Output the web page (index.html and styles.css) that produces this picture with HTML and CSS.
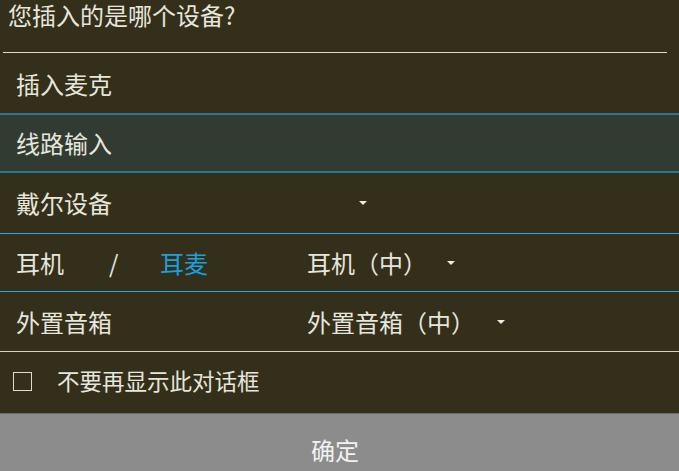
FILE: index.html
```html
<!DOCTYPE html>
<html lang="zh-CN">
<head>
<meta charset="utf-8">
<title>设备选择</title>
<link rel="stylesheet" href="styles.css">
</head>
<body>
<div class="dialog">
  <div class="title">您插入的是哪个设备?</div>
  <div class="title-rule"></div>
  <div class="row row-mic">插入麦克</div>
  <div class="row row-line">线路输入</div>
  <div class="row row-dell">
    <span class="label">戴尔设备</span>
    <span class="arrow arrow-dell"></span>
  </div>
  <div class="row row-head">
    <span class="c1">耳机</span>
    <span class="c2">/</span>
    <span class="c3 active">耳麦</span>
    <span class="c4">耳机（中）</span>
    <span class="arrow"></span>
  </div>
  <div class="row row-spk">
    <span class="c-wide">外置音箱</span>
    <span class="c4">外置音箱（中）</span>
    <span class="arrow arrow-spk"></span>
  </div>
  <div class="check-row">
    <span class="checkbox"></span>
    <span class="check-label">不要再显示此对话框</span>
  </div>
  <div class="button">确定</div>
</div>
</body>
</html>
```

FILE: styles.css
```css
html, body {
  margin: 0;
  padding: 0;
  background: #342f1a;
  width: 679px;
  height: 471px;
  overflow: hidden;
}
.dialog {
  font-family: "Noto Sans CJK SC", "Noto Sans", sans-serif;
  color: #e6e6dd;
  font-size: 24px;
  line-height: 24px;
}
.title {
  height: 52px;
  box-sizing: border-box;
  padding: 0 0 0 8px;
  line-height: 29px;
}
.title-rule {
  height: 1px;
  margin: 0 12px 0 3px;
  background: #d9d9cf;
}
.row {
  display: flex;
  align-items: center;
  padding-left: 16px;
  box-sizing: border-box;
}
.row-mic {
  height: 62px;
  padding-top: 1px;
  border-bottom: 2px solid #2a7691;
}
.row-line {
  height: 58px;
  background: #323b31;
  border-bottom: 2px solid #2a7691;
}
.row-dell {
  height: 61px;
  border-bottom: 1px solid #22a8ec;
}
.row-head {
  height: 58px;
  padding-top: 1px;
  border-bottom: 1px solid #22a8ec;
}
.row-spk {
  height: 60px;
  padding-top: 1px;
  border-bottom: 1px solid #d2d2c6;
}
.label {
  width: 343px;
}
.c1 { width: 91px; }
.c2 { width: 53px; padding-left: 2px; box-sizing: border-box; }
.c3 { width: 147px; }
.c-wide { width: 291px; }
.active { color: #1aa0de; }
.arrow {
  width: 0;
  height: 0;
  margin-left: 20px;
  margin-top: 0;
  border-left: 4px solid transparent;
  border-right: 4px solid transparent;
  border-top: 4px solid #ecece4;
}
.arrow-dell { margin-left: 0; }
.arrow-spk { margin-left: 22px; }
.check-row {
  height: 61px;
  display: flex;
  align-items: center;
  padding-left: 13px;
  font-size: 22.5px;
}
.checkbox {
  width: 17px;
  height: 17px;
  border: 1.5px solid #dcdcd4;
  margin-top: -3px;
}
.check-label {
  margin-left: 25px;
  margin-top: -5px;
}
.button {
  height: 58px;
  box-sizing: border-box;
  background: #8c8c8c;
  color: #f2f2f2;
  text-align: center;
  padding: 24px 9px 0 0;
  border-top: 1px solid #6d6d60;
}
```
